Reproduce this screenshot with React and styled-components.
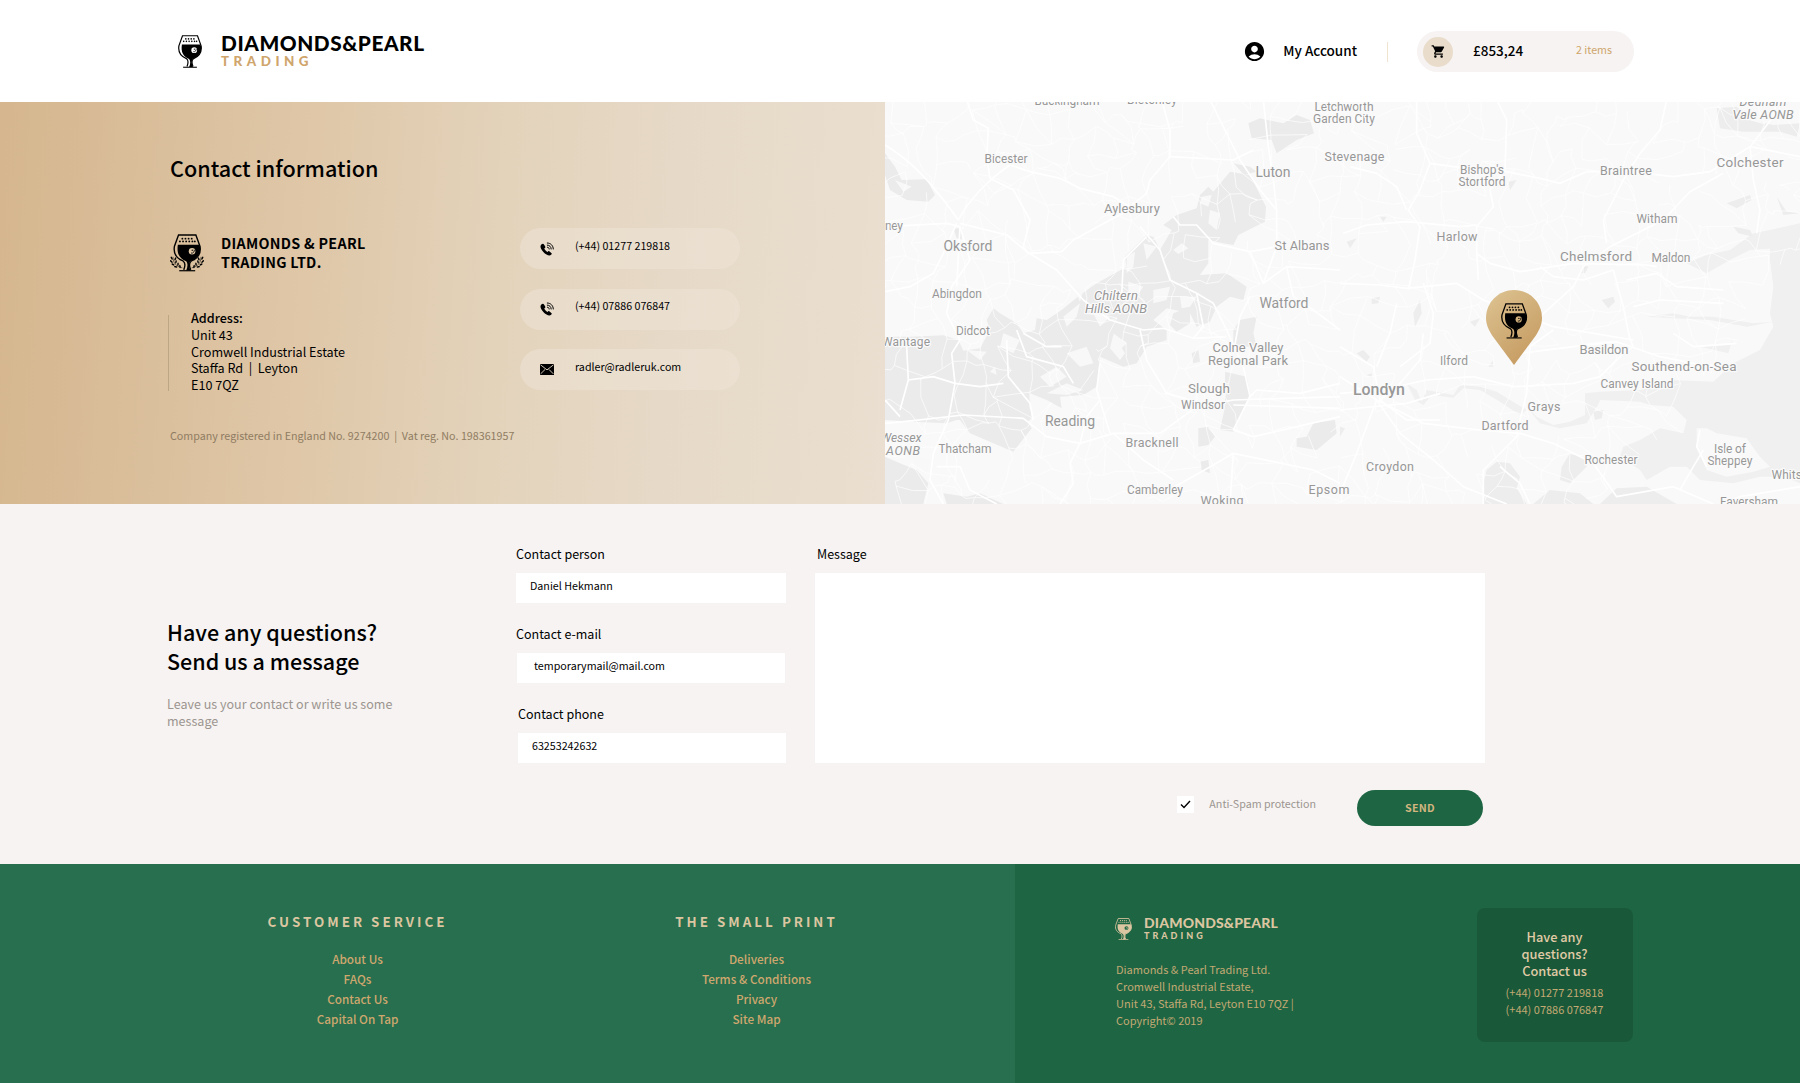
import React from "react";
import styled, { createGlobalStyle } from "styled-components";
import { MdAccountCircle, MdShoppingCart } from "react-icons/md";

const Global = createGlobalStyle`
  *, *::before, *::after { box-sizing: border-box; }
  html, body, #root { margin: 0; padding: 0; }
  body {
    width: 1800px;
    background: #f6f3f2;
    color: #000;
    font-family: "Noto Sans CJK SC", "Noto Sans", sans-serif;
    font-size: 12px;
    -webkit-font-smoothing: antialiased;
  }
  h1, h2, h3, p, ul, li, address { margin: 0; padding: 0; font-style: normal; list-style: none; }
  a { color: inherit; text-decoration: none; }
`;

const Page = styled.div`
  width: 1800px;
  height: 1083px;
  overflow: hidden;
`;

/* ---------- brand drawings ---------- */

const BUBBLES = [
  [26, 13], [35, 13], [44, 13], [53, 13],
  [19, 21], [28, 21], [37, 21], [46, 21], [55, 21], [62, 21],
];

function GlassShape({ hole }) {
  return (
    <>
      <g fill="none" stroke="currentColor" strokeWidth="4">
        <path d="M30 104C34 94 35 83 28 78C8 70 0 56 3 36L15 2.5H65L77 36C80 56 72 70 52 78C45 83 46 94 50 104" />
        <path d="M17 106.500H63" strokeWidth="3.500" />
      </g>
      <path
        fill="currentColor"
        d="M13 31H74L77 37C80 56 70 71 50 78C44 84 45 96 50 106H37C42 96 42 84 37 79C18 71 9 57 13 31Z"
      />
      {BUBBLES.map(([x, y]) => (
        <circle key={`${x}-${y}`} cx={x} cy={y} r="2.700" fill="currentColor" />
      ))}
      <circle cx="54" cy="50" r="9.500" fill={hole} />
      <path d="M60 45A7.500 7.500 0 0 1 51 55" fill="none" stroke="currentColor" strokeWidth="2.500" />
      <circle cx="54.500" cy="47" r="2" fill="currentColor" />
    </>
  );
}

function Glass({ width, height, hole }) {
  return (
    <svg width={width} height={height} viewBox="0 0 80 109" preserveAspectRatio="none" aria-hidden="true">
      <GlassShape hole={hole} />
    </svg>
  );
}

const LEAVES = [
  [4, 72, 60], [3, 82, 45], [8, 91, 30], [16, 98, 15],
  [15, 74, 115], [17, 83, 105], [23, 90, 95], [29, 97, 80],
];

function LaurelGlass() {
  const sprig = (
    <g>
      <path d="M8 68C8 86 17 97 36 101" fill="none" stroke="currentColor" strokeWidth="1.600" />
      {LEAVES.map(([x, y, r]) => (
        <ellipse key={`${x}-${y}`} cx={x} cy={y} rx="5.200" ry="2.300" fill="currentColor" transform={`rotate(${r} ${x} ${y})`} />
      ))}
    </g>
  );
  return (
    <svg width="34" height="38" viewBox="-1 0 102 113" aria-hidden="true">
      <g transform="translate(9 0) scale(1.040 1.030)"><GlassShape hole="#dfc7a6" /></g>
      {sprig}
      <g transform="translate(100 0) scale(-1 1)">{sprig}</g>
    </svg>
  );
}

const LogoRow = styled.div`
  display: flex;
  align-items: center;
  gap: ${(p) => (p.$small ? 12 : 19)}px;
  color: ${(p) => (p.$small ? "#dcc6a1" : "#000")};
`;
const Wordmark = styled.div`
  display: flex;
  flex-direction: column;
  font-family: Lato, sans-serif;
  font-weight: 900;
  white-space: nowrap;
`;
const WordTop = styled.span`
  font-size: ${(p) => (p.$small ? 14 : 20.8)}px;
  line-height: ${(p) => (p.$small ? 14 : 20)}px;
  letter-spacing: ${(p) => (p.$small ? 0.15 : 0.55)}px;
`;
const WordBottom = styled.span`
  color: ${(p) => (p.$small ? "#dcc6a1" : "#cfa56c")};
  font-size: ${(p) => (p.$small ? 9 : 13.4)}px;
  line-height: ${(p) => (p.$small ? 11 : 17)}px;
  letter-spacing: ${(p) => (p.$small ? 3 : 4.5)}px;
`;

function Logo({ small }) {
  return (
    <LogoRow $small={small}>
      <Glass width={small ? 17 : 24} height={small ? 22 : 33} hole={small ? "#1e6543" : "#fff"} />
      <Wordmark>
        <WordTop $small={small}>DIAMONDS&amp;PEARL</WordTop>
        <WordBottom $small={small}>TRADING</WordBottom>
      </Wordmark>
    </LogoRow>
  );
}

/* ---------- header ---------- */

const Header = styled.header`
  display: flex;
  align-items: center;
  justify-content: space-between;
  height: 102px;
  padding: 1px 166px 0 178px;
  background: #fff;
`;
const HeaderTools = styled.div`
  display: flex;
  align-items: center;
`;
const Account = styled.a`
  display: flex;
  align-items: center;
  gap: 17px;
  height: 20px;
  padding-right: 30px;
  border-right: 1px solid #f0e3cf;
  font-size: 13.5px;
  font-weight: 500;
  line-height: 20px;
`;
const AccountName = styled.span`
  padding-bottom: 3px;
`;
const CartPill = styled.a`
  display: flex;
  align-items: center;
  width: 217px;
  height: 41px;
  margin-left: 29px;
  padding: 0 22px 0 6px;
  border-radius: 21px;
  background: #f6f3f2;
`;
const CartBadge = styled.span`
  display: grid;
  place-items: center;
  width: 30px;
  height: 30px;
  margin-right: 20px;
  border-radius: 50%;
  background: #e9dcca;
`;
const CartTotal = styled.span`
  flex: 1;
  font-size: 13.5px;
  font-weight: 500;
  line-height: 20px;
  padding-bottom: 4px;
`;
const CartCount = styled.span`
  color: #cfa56c;
  font-size: 10.7px;
  line-height: 18px;
  padding-bottom: 3px;
`;

/* ---------- contact ---------- */

const ContactSection = styled.section`
  display: flex;
  height: 402px;
`;
const InfoPanel = styled.div`
  width: 885px;
  padding: 52px 0 0 170px;
  background: linear-gradient(94deg, #d5b68e 0%, #dfc7a8 35%, #e3d3bb 56%, #e6d9c7 75%, #eadfd0 100%);
`;
const Title = styled.h1`
  font-size: 21.6px;
  font-weight: 500;
  line-height: 28px;
`;
const InfoGrid = styled.div`
  display: grid;
  grid-template-columns: 350px 220px;
  margin-top: 46px;
`;
const Company = styled.div`
  display: flex;
  gap: 17px;
  margin-top: 6px;
`;
const CompanyName = styled.h2`
  margin-top: -1px;
  font-size: 14.3px;
  font-weight: 700;
  line-height: 19px;
  letter-spacing: 0.3px;
`;
const AddressRow = styled.div`
  display: flex;
  margin: 38px 0 0 -2px;
`;
const Rule = styled.span`
  width: 1px;
  height: 76px;
  margin-top: 5px;
  background: #bda684;
`;
const Address = styled.address`
  margin-left: 22px;
  font-size: 12.6px;
  line-height: 16.8px;
  white-space: pre;
`;
const Strong = styled.strong`
  font-weight: 500;
`;
const Registered = styled.p`
  margin-top: 34px;
  color: #8f7c62;
  font-size: 10.72px;
  line-height: 16px;
  white-space: pre;
`;
const ContactList = styled.div`
  display: flex;
  flex-direction: column;
  gap: 19.5px;
`;
const ContactPill = styled.a`
  display: flex;
  align-items: center;
  height: 41px;
  padding-left: 19px;
  border-radius: 21px;
  background: rgba(240, 230, 220, 0.42);
`;
const PillIcon = styled.span`
  display: grid;
  place-items: center;
  width: 15px;
  margin-right: 21px;
`;
const PillText = styled.span`
  padding-bottom: 6px;
  font-size: 10.7px;
  line-height: 18px;
`;

const PhoneIcon = () => (
  <svg width="14" height="14" viewBox="0 0 14 14" aria-hidden="true">
    <path d="M1.300 2.500C.2 3.600.3 5.200 1.200 7C2.300 9.200 4.200 11.200 6.500 12.500C8.700 13.800 10.300 13.600 11.300 12.500C11.900 11.800 11.900 11.400 11.300 10.900L9.500 9.400C9 9 8.500 9 8.100 9.400L7.400 10C6.200 9.500 4.800 8 4.200 6.600L5 5.900C5.400 5.500 5.500 5.100 5.200 4.600L4 2.400C3.500 1.500 2.400 1.500 1.300 2.500Z" />
    <g fill="none" stroke="#000" strokeWidth="1" strokeLinecap="round">
      <path d="M7.300 1C10.700 1 13.200 3.500 13.300 7" />
      <path d="M7.300 3.100C9.500 3.200 11.100 4.700 11.200 7" />
      <path d="M7.400 5.200C8.500 5.300 9.100 5.900 9.200 7" />
    </g>
  </svg>
);
const MailIcon = () => (
  <svg width="14" height="11" viewBox="0 0 14 11" aria-hidden="true">
    <rect width="14" height="11" />
    <path d="M.5.8 7 5.900 13.500.8M.6 9.900 5 5.500M13.400 9.900 9 5.500" fill="none" stroke="#e5d7c3" strokeWidth=".9" />
  </svg>
);

/* ---------- map ---------- */

const MapPanel = styled.div`
  position: relative;
  width: 915px;
  height: 402px;
  overflow: hidden;
  background: #f9f9f9;
`;
const MapCanvas = styled.svg`
  display: block;
`;
const Label = styled.text`
  fill: #979797;
  font-family: Roboto, sans-serif;
  font-size: ${(p) => p.$size}px;
  font-style: ${(p) => (p.$italic ? "italic" : "normal")};
  font-weight: ${(p) => (p.$medium ? 500 : 400)};
  text-anchor: middle;
  paint-order: stroke;
  stroke: #fafafa;
  stroke-width: 2.5px;
  stroke-linejoin: round;
`;
const Pin = styled.svg`
  position: absolute;
  left: 601px;
  top: 188px;
`;

/* [text, centre x, baseline y, width, size, style] in panel pixels */
const LABELS = [
  ["Buckingham", 182, 3, 65, 12], ["Bletchley", 267, 2, 50, 12],
  ["Bicester", 121, 61, 43, 12], ["Luton", 388, 75, 35, 14],
  ["Aylesbury", 247, 111, 56, 13], ["ney", 9, 128, 18, 12],
  ["Oksford", 83, 149, 49, 14], ["St Albans", 417, 148, 55, 13],
  ["Abingdon", 72, 196, 50, 12], ["Watford", 399, 206, 49, 14],
  ["Chiltern", 231, 198, 44, 13, "i"], ["Hills AONB", 231, 211, 62, 13, "i"],
  ["Didcot", 88, 233, 34, 12], ["Wantage", 21, 244, 48, 12],
  ["Colne Valley", 363, 250, 71, 13], ["Regional Park", 363, 263, 80, 13],
  ["Slough", 324, 291, 42, 13.5], ["Windsor", 318, 307, 44, 12],
  ["Reading", 185, 324, 50, 14], ["Wessex", 16, 340, 41, 12.5, "i"],
  ["AONB", 18, 353, 34, 12.5, "i"], ["Thatcham", 80, 351, 53, 12],
  ["Bracknell", 267, 345, 53, 12.5], ["Camberley", 270, 392, 56, 12],
  ["Woking", 337, 403, 43, 12.5], ["Letchworth", 459, 9, 59, 12],
  ["Garden City", 459, 21, 62, 12], ["Stevenage", 469.5, 59, 60, 12.5],
  ["Bishop's", 597, 72, 44, 12], ["Stortford", 597, 84, 47, 12],
  ["Braintree", 741, 73, 52, 12.5], ["Colchester", 865, 65, 67, 13.5],
  ["Dedham", 878, 4, 47, 12.5, "i"], ["Vale AONB", 878, 16.5, 61, 12.5, "i"],
  ["Witham", 772, 121, 41, 12], ["Harlow", 572, 139, 41, 12.5],
  ["Chelmsford", 711, 159, 72, 13.5], ["Maldon", 786, 160, 39, 12],
  ["Basildon", 719, 252, 49, 13], ["Ilford", 569, 263, 28, 12],
  ["Southend-on-Sea", 799, 269, 105, 13.5], ["Canvey Island", 752, 286, 73, 12],
  ["Londyn", 494, 293, 52, 16, "m"], ["Grays", 659, 309, 33, 12.5],
  ["Dartford", 620, 328, 47, 12.5], ["Rochester", 726, 362, 53, 12],
  ["Croydon", 505, 369, 48, 12.5], ["Isle of", 845, 351, 32, 12],
  ["Sheppey", 845, 363, 45, 12], ["Whitstable", 915, 377, 57, 12],
  ["Epsom", 444, 392, 41, 12.5], ["Faversham", 864, 404, 58, 12],
];

/* parks and downs, western half */
const PARKS_W = [
  "M15 160L45 200 65 240 140 238 165 285 145 305 80 300 30 270 15 225Z",
  "M15 710H90L190 706 235 720 250 752 300 745 330 690 320 660 340 625 360 640 410 670 430 700 465 690 470 655 500 660 545 630 600 585 650 550 740 500 735 470 800 405 820 410 840 450 875 390 850 375 890 345 950 325 960 285 985 260 1000 275 1050 215 1110 225 1158 320 1155 365 1075 405 1060 435 1030 430 985 420 985 490 960 525 1040 520 1100 560 1090 600 1050 590 1010 620 990 665 950 680 930 640 860 625 820 660 860 690 860 720 800 740 770 790 730 800 660 770 650 860 610 885 540 890 545 925 500 900 450 880 455 955 400 1000 300 960 230 960 200 970 100 965 15 960Z",
  "M240 960 340 950 440 960 455 985 400 1055 340 1030 270 1000Z",
  "M15 1070 60 1090 110 1110 145 1150 130 1212 15 1212Z",
  "M1105 70 1140 55 1210 70 1250 45 1290 60 1302 100 1250 120 1190 160 1175 120 1115 115Z",
  "M880 640 930 620 930 670 890 695 870 675Z",
  "M1080 660 1130 650 1120 700 1130 740 1060 740 1060 690Z",
  "M1035 815 1100 830 1110 880 1085 940 1060 995 1020 990 1035 920Z",
  "M955 985 985 980 1005 1010 985 1035 955 1040Z",
  "M935 760 955 750 960 785 940 790Z",
  "M960 1085 985 1080 990 1120 965 1110Z",
  "M1280 1010 1300 970 1365 960 1370 1000 1310 1050 1250 1040 1250 1015Z",
  "M190 1180 260 1190 300 1180 370 1212H200Z",
  "M220 385 245 385 245 420 230 415Z",
  "M1060 190 1110 200 1130 215 1090 225Z",
];
/* light clearings cut through the hills */
const CLEARINGS = [
  "M965 290 995 285 985 320 960 310Z", "M740 470 765 455 760 500 740 520Z", "M790 430 830 440 800 480Z",
  "M550 650 600 610 590 650 560 680Z", "M480 830 530 800 560 830 510 860Z", "M560 760 620 740 640 790 600 800Z",
  "M700 700 740 730 710 760Z", "M820 570 870 560 860 600 820 610Z", "M370 700 420 720 400 760 360 740Z",
  "M990 330 1020 340 1010 390 985 370Z", "M640 640 690 650 660 680Z", "M880 450 905 430 925 445 895 462Z",
  "M500 880 560 850 610 870 560 885Z", "M260 750 320 755 300 780Z", "M90 1060 150 1080 140 1120 110 1100Z",
  "M900 590 950 590 930 620 905 625Z", "M690 745 700 705 735 760 720 780Z", "M330 815 345 800 350 825Z",
  "M45 240 95 260 70 275Z", "M580 560 610 570 600 605Z", "M745 545 790 560 770 590 745 580Z",
];
const ROADS_W = [
  "M15 135C90 180 150 240 235 360", "M235 360C265 300 330 235 390 195", "M240 370L380 405 440 455 530 510 610 600 690 660 790 690 850 685 940 715 1040 710",
  "M260 0 280 60 325 85 320 170 330 235 400 270 450 360 430 440 445 460", "M445 460 545 455 580 420 700 355 750 330",
  "M390 195 450 215 540 235 600 265 700 290 750 320", "M750 320 800 280 810 240 870 170 870 90 845 0",
  "M780 380 840 450 870 540 950 580 1000 610 1040 690 1090 800 1110 890 1060 990",
  "M990 0 1080 180 1140 270 1190 330 1190 440 1150 550", "M1150 0 1165 140 1180 240 1190 330",
  "M15 380 200 370 240 380 270 480 215 560 200 640 240 720 215 760 225 850 205 960 160 1060 150 1140 190 1212",
  "M15 970 100 962 250 945 430 955 500 1010 600 1030 700 1000 840 1000 950 920 1060 900 1380 890",
  "M850 1180 1000 1095 1060 1060 1300 1110 1380 1150", "M1110 590 1080 650 1060 760",
  "M15 575 90 560 160 520 190 460 230 370", "M240 380 230 560", "M880 350 900 375 950 375 1000 430 1110 455 1190 440",
  "M870 170 1060 180 1120 150", "M600 1030 570 1090 580 1150 540 1212", "M170 1100 240 1100 270 1170 350 1212",
  "M1060 990 1120 1010 1380 950", "M1060 915 1380 925", "M1110 455 1150 550 1220 500 1380 510",
  "M700 1000 790 1080 880 1140", "M780 690 800 780 860 880 1000 920", "M660 790 650 870 690 1000",
  "M725 590 730 480 800 410", "M600 1030 620 950 660 900", "M410 690 440 770 550 800 580 850",
  "M80 740 85 840 60 930", "M15 900 60 950", "M225 850 160 830 85 840", "M380 720 385 830 450 910 460 960",
  "M225 850 300 860 370 850", "M1220 500 1240 590 1300 630 1380 690", "M950 580 970 680 940 715",
  "M545 740 500 740 430 700", "M1110 890 1130 870 1260 880 1380 850", "M1060 1060 1050 1212",
];

/* water and marsh, eastern half */
const SEA_E = [
  "M1380 380 1330 400 1290 440 1290 480 1300 560 1290 640 1300 680 1260 750 1180 790 1120 845 990 840 900 870 780 875 735 880 735 945 690 965 640 975 590 950 560 920 600 970 660 985 740 970 770 920 860 910 1000 920 1040 960 1030 1000 960 985 900 1020 850 1040 840 1070 900 1110 920 1140 990 1100 1040 1100 1080 1140 1180 1150 1260 1130 1330 1130 1380 1150Z",
  "M1040 490 1100 465 1170 450 1240 400 1290 390 1380 370V440L1230 450 1170 480 1100 520Z",
  "M920 650 1000 640 1050 650 1120 650 1240 670 1300 665 1220 680 1110 660 1000 655Z",
  "M1080 740 1170 735 1180 710 1165 760Z",
  "M200 850 230 870 245 905 260 870 340 885 360 855 420 860 470 875 510 900 560 930 540 945 480 905 420 870 370 865 340 893 275 885 250 915 225 900Z",
];
const ISLAND_E = [
  "M1070 985 1100 985 1130 1000 1220 1015 1260 1070 1290 1100 1240 1115 1160 1130 1100 1110 1070 1040Z",
  "M780 900 900 905 960 925 940 960 820 965 740 985 770 925Z",
];
const PARKS_E = [
  "M1130 25 1190 20 1230 60 1300 75 1380 70 1370 110 1320 95 1210 95 1140 85Z",
  "M440 1110 470 1085 510 1090 540 1130 530 1165 560 1212H430V1150Z",
  "M665 1100 690 1060 730 1070 740 1100 690 1150 660 1140Z", "M630 1170 720 1180 760 1212H580Z",
  "M830 1165 920 1160 1010 1212H780Z", "M1180 380 1230 390 1240 410 1195 400Z",
  "M1160 310 1230 285 1235 300 1190 325Z", "M1310 290 1340 335 1380 340 1330 345Z",
  "M720 520 730 495 745 500 735 520Z", "M785 600 820 590 825 605 805 625Z", "M760 935 790 930 785 955 765 960Z",
  "M50 760 70 750 90 770 80 785Z", "M95 595 120 590 115 610 95 612Z", "M390 665 420 655 405 680Z",
  "M20 425 50 415 30 445Z", "M505 245 530 240 510 270Z", "M220 640 240 600 245 640 225 680Z", "M0 980 15 985 0 1010Z",
  "M445 800 460 780 460 800Z", "M80 825 95 820 95 832Z", "M120 350 140 350 130 365Z",
];
const ROADS_E = [
  "M230 0 230 100 270 190 240 270 205 330 240 380 225 480 205 570", "M270 190 340 200 500 215 600 235 660 250 740 215 870 215 1000 230 1110 215 1230 140 1380 170",
  "M470 0 500 60 495 210 450 270 460 320 410 380 410 450 415 540", "M10 400 80 375 200 365 360 380 410 375",
  "M0 550 120 555 200 565 350 550 430 600 640 680 880 720", "M600 650 700 560 730 500 810 440 970 360 1050 275 1150 220",
  "M410 460 450 490 540 515 700 490 920 495 950 500", "M800 430 790 360 850 240 900 160 960 90 980 0",
  "M820 510 850 620 870 720 880 740", "M540 760 700 740 830 725 960 770 1060 790 1150 800",
  "M540 960 560 880 570 740 640 690", "M0 880 120 870 260 840 400 830 520 860 700 850 780 830 850 760 880 740",
  "M250 700 240 780 180 850 120 900", "M0 830 110 900 250 970 420 990 540 1000 640 1030 760 1090 830 1190 1000 1160 1120 1212",
  "M540 960 530 1010 430 1110 430 1212", "M110 900 80 980 50 1060 0 1180", "M110 900 180 1000 280 1080 370 1160 500 1212",
  "M0 740 100 800 120 900 200 960 300 960", "M480 1100 540 1150 570 1212", "M1140 1212 1200 1190 1380 1160",
  "M1090 1050 1060 1100 1020 1170", "M1100 1100 1070 1040 1080 990", "M30 200 110 220 170 260 200 330",
  "M0 930 200 910 300 880", "M170 610 150 700 110 800", "M250 550 280 640 270 730 180 800", "M1230 140 1300 50 1310 0",
  "M1230 140 1240 240 1260 330 1250 400", "M860 540 950 520 1010 560 1150 570", "M880 620 960 600 1150 610",
  "M820 510 730 540 640 530 600 500", "M1000 700 1060 740 1190 730",
];

/* fine lanes: a jittered lattice of short wandering segments */
function buildLanes() {
  let seed = 7;
  const rand = () => {
    seed = (seed * 16807) % 2147483647;
    return seed / 2147483647;
  };
  const step = 21;
  const cols = 46;
  const rows = 21;
  const pts = [];
  for (let r = 0; r < rows; r += 1) {
    pts.push([]);
    for (let c = 0; c < cols; c += 1) {
      pts[r].push([c * step + (rand() - 0.5) * 20 - 8, r * step + (rand() - 0.5) * 20 - 8]);
    }
  }
  const out = [];
  const link = (a, b) => {
    const mx = (a[0] + b[0]) / 2 + (rand() - 0.5) * 8;
    const my = (a[1] + b[1]) / 2 + (rand() - 0.5) * 8;
    out.push(`M${a[0].toFixed(1)} ${a[1].toFixed(1)}L${mx.toFixed(1)} ${my.toFixed(1)} ${b[0].toFixed(1)} ${b[1].toFixed(1)}`);
  };
  for (let r = 0; r < rows - 1; r += 1) {
    for (let c = 0; c < cols - 1; c += 1) {
      const x = pts[r][c][0];
      const y = pts[r][c][1];
      const water = x > 700 && y > 150 && x > 1010 - y * 0.75;
      if (!water) {
        if (rand() < 0.68) link(pts[r][c], pts[r][c + 1]);
        if (rand() < 0.68) link(pts[r][c], pts[r + 1][c]);
        if (rand() < 0.14) link(pts[r][c], pts[r + 1][c + 1]);
      }
    }
  }
  return out.join("");
}
const LANES = buildLanes();

const west = "translate(-5 -2) scale(.33333)";
const east = "translate(455 -2) scale(.33333)";
const draw = (list) => list.map((d) => <path key={d} d={d} />);

function LondonMap() {
  return (
    <MapPanel>
      <MapCanvas width="915" height="402" viewBox="0 0 915 402">
        <g transform={west} fill="#ebebeb">{draw(PARKS_W)}</g>
        <g transform={west} fill="#f8f8f8">{draw(CLEARINGS)}</g>
        <g transform={east} fill="#f0f0f0">{draw(SEA_E)}</g>
        <g transform={east} fill="#f9f9f9">{draw(ISLAND_E)}</g>
        <g transform={east} fill="#ededed">{draw(PARKS_E)}</g>
        <path d={LANES} fill="none" stroke="#fff" strokeWidth=".8" strokeOpacity=".85" strokeLinejoin="round" />
        <g fill="none" stroke="#fff" strokeWidth="5" strokeLinejoin="round">
          <g transform={west}>{draw(ROADS_W)}</g>
          <g transform={east}>{draw(ROADS_E)}</g>
        </g>
        {LABELS.map(([text, x, y, w, size, kind]) => (
          <Label key={text} x={x} y={y} textLength={w} $size={size} $italic={kind === "i"} $medium={kind === "m"}>
            {text}
          </Label>
        ))}
      </MapCanvas>
      <Pin width="56" height="75" viewBox="0 0 56 75" aria-hidden="true">
        <defs>
          <linearGradient id="pin" x1="0.1" y1="0" x2="0.75" y2="1">
            <stop offset="0" stopColor="#dcc290" />
            <stop offset="1" stopColor="#c59a60" />
          </linearGradient>
        </defs>
        <path d="M28 0C43.500 0 56 12.500 56 28C56 35 53 40.500 49.500 46L28 75L6.500 46C3 40.500 0 35 0 28C0 12.500 12.500 0 28 0Z" fill="url(#pin)" />
        <g transform="translate(15 13) scale(.328)" color="#000"><GlassShape hole="#d3b17d" /></g>
      </Pin>
    </MapPanel>
  );
}

/* ---------- form ---------- */

const FormSection = styled.section`
  display: grid;
  grid-template-columns: 349px 299px 670px;
  height: 360px;
  padding: 41px 0 0 167px;
  background: #f6f3f2;
`;
const Intro = styled.div`
  padding-top: 72px;
`;
const IntroTitle = styled.h2`
  font-size: 21.5px;
  font-weight: 500;
  line-height: 29px;
`;
const IntroText = styled.p`
  width: 240px;
  margin-top: 21px;
  color: #9c9590;
  font-size: 12.55px;
  line-height: 16.5px;
`;
const FieldLabel = styled.label`
  display: block;
  padding-left: ${(p) => p.$indent || 0}px;
  font-size: 12.5px;
  line-height: 18px;
`;
const Field = styled.div`
  height: 80px;
`;
const TextInput = styled.input`
  display: block;
  width: ${(p) => p.$width}px;
  height: 30px;
  margin: 10px 0 0 ${(p) => p.$shift || 0}px;
  padding: 0 ${(p) => p.$pad}px 5px;
  border: 0;
  border-radius: 0;
  outline: 0;
  background: #fff;
  color: #000;
  font: 400 10.7px "Noto Sans CJK SC", "Noto Sans", sans-serif;
`;
const MessageBox = styled.textarea`
  display: block;
  width: 670px;
  height: 190px;
  margin-top: 10px;
  border: 0;
  outline: 0;
  resize: none;
  background: #fff;
`;
const FormActions = styled.div`
  display: flex;
  justify-content: flex-end;
  margin-top: 27px;
  padding-right: 2px;
`;
const SpamCheck = styled.label`
  display: flex;
  align-items: center;
  gap: 15px;
  height: 29px;
  margin-right: 41px;
  color: #9c9590;
  font-size: 10.7px;
  line-height: 18px;
`;
const SpamText = styled.span`
  padding-bottom: 2px;
`;
const CheckBox = styled.span`
  display: grid;
  place-items: center;
  width: 17px;
  height: 17px;
  background: #fff;
`;
const SendButton = styled.button`
  width: 126px;
  height: 36px;
  padding: 0 0 2px;
  border: 0;
  border-radius: 18px;
  background: #1e6543;
  color: #d3b57f;
  font: 700 10.7px/33px "Noto Sans CJK SC", "Noto Sans", sans-serif;
  letter-spacing: 0.3px;
`;

const FIELDS = [
  { label: "Contact person", value: "Daniel Hekmann", width: 270, pad: 14 },
  { label: "Contact e-mail", value: "temporarymail@mail.com", width: 268, pad: 17, shift: 1 },
  { label: "Contact phone", value: "63253242632", width: 268, pad: 14, shift: 2, indent: 2 },
];

/* ---------- footer ---------- */

const Footer = styled.footer`
  display: flex;
  height: 219px;
`;
const FooterLinks = styled.div`
  display: flex;
  width: 1015px;
  padding: 48px 57px 0 158px;
  background: #276f4e;
`;
const LinkColumn = styled.nav`
  width: 399px;
  text-align: center;
`;
const ColumnTitle = styled.h3`
  color: #dcc6a1;
  font-size: 13.4px;
  font-weight: 700;
  line-height: 19px;
  letter-spacing: 3px;
`;
const LinkList = styled.ul`
  margin-top: 18px;
  color: #cfa76e;
  font-size: 11.75px;
  font-weight: 500;
  line-height: 20px;
`;
const FooterAbout = styled.div`
  display: flex;
  justify-content: space-between;
  flex: 1;
  padding: 44px 167px 0 100px;
  background: #1e6543;
`;
const Legal = styled.div`
  padding-top: 8px;
`;
const LegalText = styled.p`
  margin: 20px 0 0 1px;
  color: #c3a973;
  font-size: 11px;
  line-height: 17px;
`;
const HelpCard = styled.aside`
  width: 156px;
  height: 134px;
  padding: 20px 1px 0 0;
  border-radius: 8px;
  background: #195839;
  text-align: center;
`;
const HelpTitle = styled.p`
  color: #e0cba6;
  font-size: 12.8px;
  font-weight: 500;
  line-height: 17px;
`;
const HelpPhones = styled.p`
  margin-top: 5px;
  color: #c3a973;
  font-size: 11px;
  line-height: 17px;
`;

const LINKS = [
  { title: "CUSTOMER SERVICE", items: ["About Us", "FAQs", "Contact Us", "Capital On Tap"] },
  { title: "THE SMALL PRINT", items: ["Deliveries", "Terms & Conditions", "Privacy", "Site Map"] },
];

export default function App() {
  return (
    <Page>
      <Global />
      <Header>
        <Logo />
        <HeaderTools>
          <Account href="#">
            <MdAccountCircle size={23} />
            <AccountName>My Account</AccountName>
          </Account>
          <CartPill href="#">
            <CartBadge><MdShoppingCart size={15} /></CartBadge>
            <CartTotal>£853,24</CartTotal>
            <CartCount>2 items</CartCount>
          </CartPill>
        </HeaderTools>
      </Header>

      <ContactSection>
        <InfoPanel>
          <Title>Contact information</Title>
          <InfoGrid>
            <div>
              <Company>
                <LaurelGlass />
                <CompanyName>DIAMONDS &amp; PEARL<br />TRADING LTD.</CompanyName>
              </Company>
              <AddressRow>
                <Rule />
                <Address>
                  <Strong>Address:</Strong>
                  {"\nUnit 43\nCromwell Industrial Estate\nStaffa Rd  |  Leyton\nE10 7QZ"}
                </Address>
              </AddressRow>
              <Registered>{"Company registered in England No. 9274200  |  Vat reg. No. 198361957"}</Registered>
            </div>
            <ContactList>
              <ContactPill href="#"><PillIcon><PhoneIcon /></PillIcon><PillText>(+44) 01277 219818</PillText></ContactPill>
              <ContactPill href="#"><PillIcon><PhoneIcon /></PillIcon><PillText>(+44) 07886 076847</PillText></ContactPill>
              <ContactPill href="#"><PillIcon><MailIcon /></PillIcon><PillText>radler@radleruk.com</PillText></ContactPill>
            </ContactList>
          </InfoGrid>
        </InfoPanel>
        <LondonMap />
      </ContactSection>

      <FormSection>
        <Intro>
          <IntroTitle>Have any questions?<br />Send us a message</IntroTitle>
          <IntroText>Leave us your contact or write us some message</IntroText>
        </Intro>
        <div>
          {FIELDS.map((f) => (
            <Field key={f.label}>
              <FieldLabel $indent={f.indent}>{f.label}</FieldLabel>
              <TextInput defaultValue={f.value} $width={f.width} $pad={f.pad} $shift={f.shift} />
            </Field>
          ))}
        </div>
        <div>
          <FieldLabel $indent={2}>Message</FieldLabel>
          <MessageBox />
          <FormActions>
            <SpamCheck>
              <CheckBox>
                <svg width="11" height="9" viewBox="0 0 11 9" aria-hidden="true">
                  <path d="M1 4.500 4 7.500 10 1" fill="none" stroke="#000" strokeWidth="1.400" />
                </svg>
              </CheckBox>
              <SpamText>Anti-Spam protection</SpamText>
            </SpamCheck>
            <SendButton>SEND</SendButton>
          </FormActions>
        </div>
      </FormSection>

      <Footer>
        <FooterLinks>
          {LINKS.map((col) => (
            <LinkColumn key={col.title}>
              <ColumnTitle>{col.title}</ColumnTitle>
              <LinkList>
                {col.items.map((item) => <li key={item}><a href="#">{item}</a></li>)}
              </LinkList>
            </LinkColumn>
          ))}
        </FooterLinks>
        <FooterAbout>
          <Legal>
            <Logo small />
            <LegalText>
              Diamonds &amp; Pearl Trading Ltd.<br />
              Cromwell Industrial Estate,<br />
              Unit 43, Staffa Rd, Leyton E10 7QZ |<br />
              Copyright© 2019
            </LegalText>
          </Legal>
          <HelpCard>
            <HelpTitle>Have any<br />questions?<br />Contact us</HelpTitle>
            <HelpPhones>(+44) 01277 219818<br />(+44) 07886 076847</HelpPhones>
          </HelpCard>
        </FooterAbout>
      </Footer>
    </Page>
  );
}
